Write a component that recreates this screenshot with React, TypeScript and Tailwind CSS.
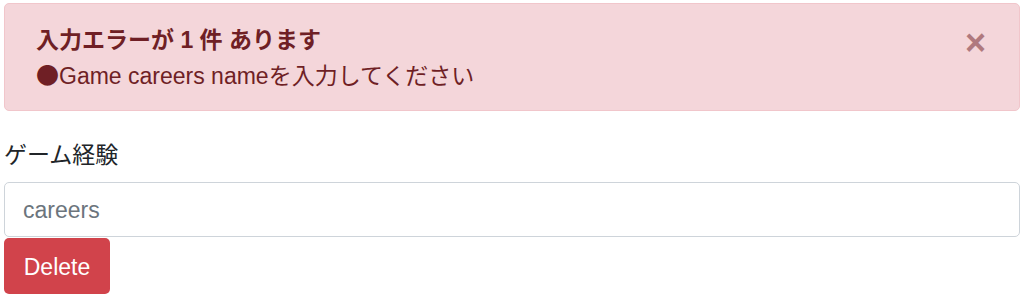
export default function App() {
  return (
    <div
      className="w-[1024px] h-[300px] bg-white overflow-hidden pt-[3px] px-[4px] text-[23px] leading-[34px]"
      style={{ fontFamily: '"Liberation Sans", "Noto Sans CJK JP", sans-serif' }}
    >
      <div className="relative rounded-[5px] border border-[#f1c6cb] bg-[#f4d6da] text-[#6f1f25] pl-[31px] pr-[60px] py-[19px] h-[108px]">
        <div className="font-bold">入力エラーが 1 件 あります</div>
        <div>
          <span style={{ fontFamily: '"Noto Sans CJK JP", sans-serif' }}>●</span>Game careers nameを入力してください
        </div>
        <button
          type="button"
          className="absolute right-[33px] top-[21px] text-[36px] leading-[36px] font-bold text-[#6f1f25] opacity-50"
        >
          ×
        </button>
      </div>
      <div className="mt-[27px] mb-[10px] text-[#212529]">ゲーム経験</div>
      <input
        type="text"
        placeholder="careers"
        className="block w-full h-[55px] rounded-[5px] border border-[#ced4da] bg-white px-[18px] pt-[1px] text-[23px] placeholder:text-[#6c757d] outline-none"
      />
      <button
        type="button"
        className="mt-[1px] h-[56px] w-[106px] rounded-[5px] bg-[#d1434b] text-white text-[23px] text-center pt-[1px]"
      >
        Delete
      </button>
    </div>
  );
}
